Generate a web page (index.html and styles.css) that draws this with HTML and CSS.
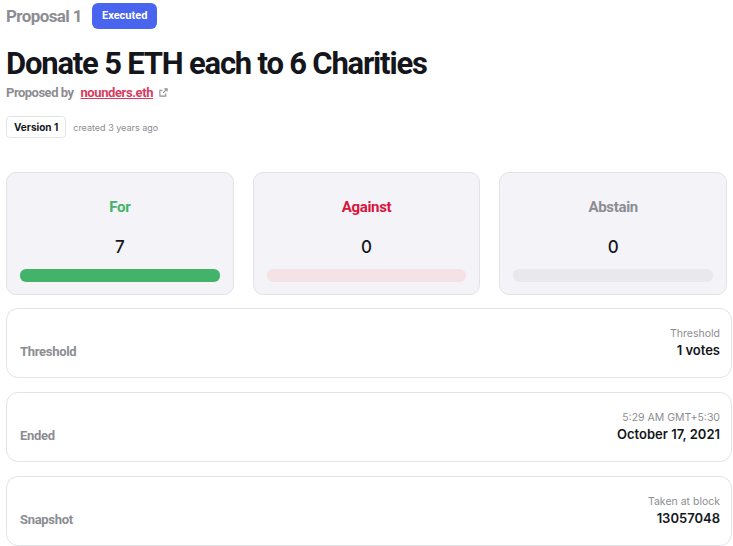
FILE: index.html
```html
<!DOCTYPE html>
<html>
<head>
<meta charset="utf-8">
<link rel="stylesheet" href="styles.css">
</head>
<body>
<div class="page">
  <div class="topline">
    <span class="prop-num">Proposal 1</span>
    <span class="badge">Executed</span>
  </div>
  <h1 class="title">Donate 5 ETH each to 6 Charities</h1>
  <div class="proposer">
    <span class="by">Proposed by</span>
    <a class="who">nounders.eth</a>
    <svg class="ext" width="9" height="9" viewBox="0 0 10 10"><path d="M6 1h3v3M9 1L4.5 5.5M7.5 6v3H1V2.5h3" fill="none" stroke="#8c8d92" stroke-width="1.2"/></svg>
  </div>
  <div class="version">
    <span class="vbtn">Version 1</span>
    <span class="created">created 3 years ago</span>
  </div>
  <div class="votes">
    <div class="vcard">
      <div class="vlabel for">For</div>
      <div class="vnum">7</div>
      <div class="bar bar-for"></div>
    </div>
    <div class="vcard">
      <div class="vlabel against">Against</div>
      <div class="vnum">0</div>
      <div class="bar bar-against"></div>
    </div>
    <div class="vcard">
      <div class="vlabel abstain">Abstain</div>
      <div class="vnum">0</div>
      <div class="bar bar-abstain"></div>
    </div>
  </div>
  <div class="rows">
    <div class="row">
      <div class="rlabel">Threshold</div>
      <div class="rright"><div class="rsmall">Threshold</div><div class="rval">1 votes</div></div>
    </div>
    <div class="row">
      <div class="rlabel">Ended</div>
      <div class="rright"><div class="rsmall">5:29 AM GMT+5:30</div><div class="rval">October 17, 2021</div></div>
    </div>
    <div class="row">
      <div class="rlabel">Snapshot</div>
      <div class="rright"><div class="rsmall">Taken at block</div><div class="rval">13057048</div></div>
    </div>
  </div>
</div>
</body>
</html>
```
FILE: styles.css
```css
html, body {
  margin: 0;
  padding: 0;
  background: #ffffff;
  overflow: hidden;
}
body {
  width: 733px;
  height: 546px;
}
.page {
  padding-left: 6px;
  font-family: "Roboto", "Liberation Sans", sans-serif;
  color: #14161b;
}
.topline {
  display: flex;
  align-items: center;
  gap: 10px;
  height: 26px;
  margin-top: 3px;
}
.prop-num {
  font-size: 17px;
  font-weight: 700;
  letter-spacing: -0.6px;
  color: #8c8d92;
}
.badge {
  background: #4965f0;
  color: #ffffff;
  font-size: 11px;
  font-weight: 700;
  height: 26px;
  line-height: 26px;
  padding: 0 10px;
  border-radius: 6px;
}
.title {
  margin: 17px 0 0 0;
  font-size: 31px;
  line-height: 36px;
  font-weight: 700;
  letter-spacing: -1.2px;
  color: #14161b;
}
.proposer {
  display: flex;
  align-items: center;
  gap: 5px;
  margin-top: 1px;
  height: 18px;
}
.by {
  font-size: 13px;
  font-weight: 700;
  letter-spacing: -0.5px;
  color: #8c8d92;
}
.who {
  font-size: 13px;
  font-weight: 700;
  letter-spacing: -0.4px;
  color: #d63c5e;
  text-decoration: underline;
  margin-left: 2px;
}
.ext {
  margin-left: 1px;
}
.version {
  display: flex;
  align-items: center;
  gap: 7px;
  margin-top: 15px;
}
.vbtn {
  border: 1px solid #e2e3e8;
  border-radius: 4px;
  height: 20px;
  line-height: 20px;
  padding: 0 7px;
  font-size: 10px;
  font-weight: 700;
  font-family: "Inter", sans-serif;
}
.created {
  font-size: 9px;
  color: #8c8d92;
  font-family: "Inter", sans-serif;
}
.votes {
  display: flex;
  gap: 19px;
  margin-top: 34px;
  width: 721px;
}
.vcard {
  flex: 1;
  height: 123px;
  background: #f4f4f8;
  border: 1px solid #e2e3e8;
  border-radius: 10px;
  padding: 0 13px;
  box-sizing: border-box;
  display: flex;
  flex-direction: column;
  align-items: center;
}
.vlabel {
  margin-top: 24px;
  font-size: 15px;
  font-weight: 700;
  letter-spacing: -0.3px;
  line-height: 20px;
}
.for { color: #43b369; }
.against { color: #d6163f; }
.abstain { color: #8c8d92; }
.vnum {
  margin-top: 19px;
  font-size: 17px;
  font-weight: 500;
  line-height: 22px;
  font-family: "Inter", sans-serif;
}
.bar {
  margin-top: 11px;
  width: 100%;
  height: 13px;
  border-radius: 6px;
}
.bar-for { background: #43b369; }
.bar-against { background: #f4e2e7; }
.bar-abstain { background: #e8e8ed; }
.rows {
  display: flex;
  flex-direction: column;
  gap: 14px;
  margin-top: 13px;
  width: 726px;
}
.row {
  height: 70px;
  border: 1px solid #e2e3e8;
  border-radius: 12px;
  box-sizing: border-box;
  display: flex;
  justify-content: space-between;
  padding: 0 11px 0 13px;
}
.rlabel {
  font-size: 13px;
  font-weight: 700;
  letter-spacing: -0.3px;
  color: #8c8d92;
  margin-top: 35px;
}
.rright {
  text-align: right;
  margin-top: 18px;
  font-family: "Inter", sans-serif;
}
.rsmall {
  font-size: 10.5px;
  color: #8c8d92;
  line-height: 14px;
}
.rval {
  font-size: 13px;
  font-weight: 600;
  line-height: 18px;
  color: #14161b;
}
```
